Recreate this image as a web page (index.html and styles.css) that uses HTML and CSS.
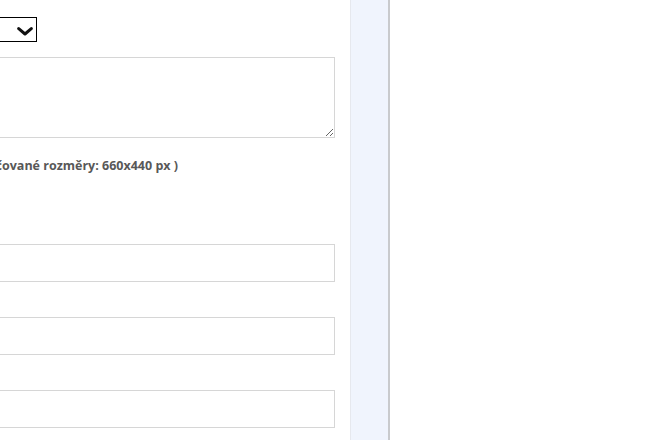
FILE: index.html
```html
<!DOCTYPE html>
<html lang="cs">
<head>
<meta charset="utf-8">
<title>Formulář</title>
<link rel="stylesheet" href="styles.css">
</head>
<body>
<div class="page">
  <form class="form">
    <div class="select">
      <span class="select-value">Vyberte</span>
      <svg class="chev" width="16" height="9" viewBox="0 0 16 9"><path d="M1.7 1.6 L8 7 L14.3 1.6" fill="none" stroke="#111" stroke-width="3" stroke-linecap="round" stroke-linejoin="round"/></svg>
    </div>
    <textarea class="area"></textarea>
    <p class="hint"><span class="hint-lead">Obrázek (doporuč</span>ované rozměry: 660x440 px )</p>
    <label class="lbl">Titulek</label>
    <input class="field" type="text">
    <label class="lbl">Popis</label>
    <input class="field" type="text">
    <label class="lbl">Odkaz</label>
    <input class="field" type="text">
  </form>
  <aside class="rail"></aside>
  <div class="rest"></div>
</div>
</body>
</html>
```
FILE: styles.css
```css
html, body {
  margin: 0;
  padding: 0;
  background: #fff;
  overflow: hidden;
}
body {
  font-family: "Open Sans", "Lato", sans-serif;
  color: #555;
}
.page {
  display: flex;
  height: 440px;
  align-items: stretch;
}
.form {
  width: 500px;
  margin-left: -165px;
  flex: none;
  display: flex;
  flex-direction: column;
  padding-top: 17px;
}
.select {
  width: 202px;
  height: 25px;
  box-sizing: border-box;
  border: 1px solid #000;
  display: flex;
  align-items: center;
  justify-content: space-between;
  padding: 0 3px 0 6px;
  font-size: 13px;
  color: #111;
}
.chev {
  display: block;
  margin-top: 3px;
}
.area {
  margin: 15px 0 0;
  width: 100%;
  height: 81px;
  box-sizing: border-box;
  border: 1px solid #d6d6d6;
  padding: 6px;
  resize: vertical;
  font-family: inherit;
}
.hint {
  margin: 20px 0 0;
  font-size: 12.5px;
  font-weight: 700;
  line-height: 15px;
  color: #585858;
  white-space: nowrap;
}
.hint-lead {
  display: inline-block;
  width: 167px;
  text-align: right;
  direction: rtl;
  unicode-bidi: plaintext;
}
.lbl {
  display: block;
  height: 35px;
  font-size: 13px;
  color: transparent;
}
.hint + .lbl {
  height: 71px;
}
.field {
  width: 100%;
  height: 38px;
  box-sizing: border-box;
  border: 1px solid #d6d6d6;
  margin: 0;
  padding: 0 10px;
  font-family: inherit;
}
.rail {
  flex: none;
  width: 37px;
  margin-left: 15px;
  background: #f0f4fd;
  border-left: 1px solid #e6e8ee;
  border-right: 2px solid #c9cacd;
}
.rest {
  flex: 1;
}
```
